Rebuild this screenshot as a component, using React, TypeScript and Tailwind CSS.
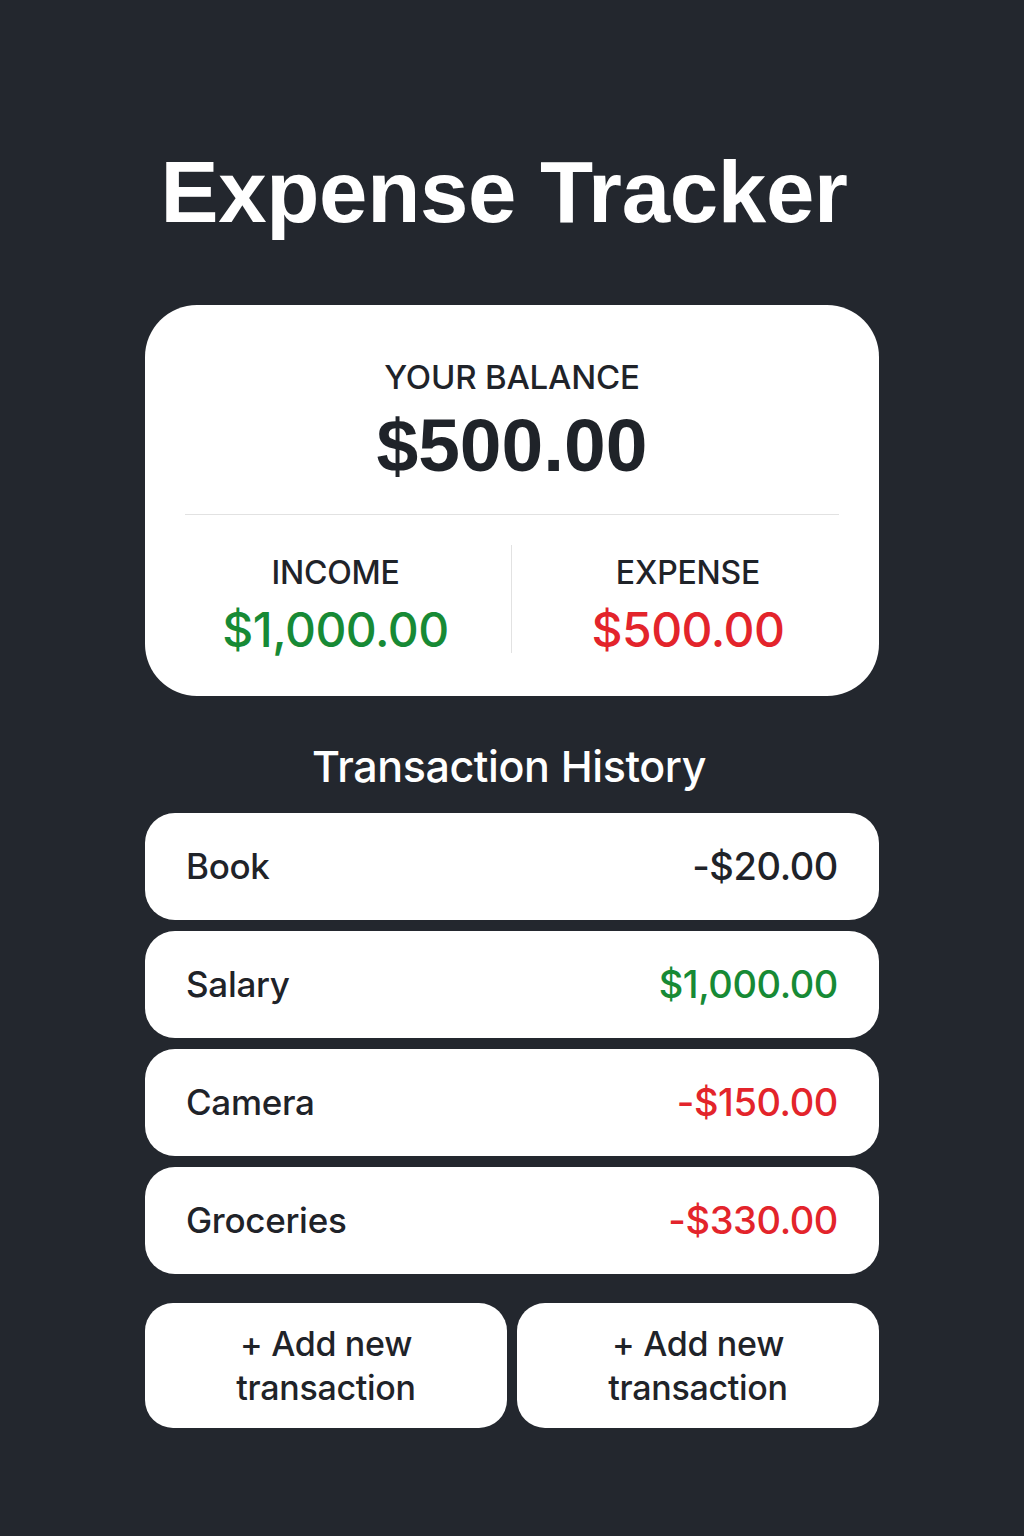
import React from "react";

const font = { fontFamily: '"Liberation Sans", Arial, sans-serif' };
const med = { fontFamily: 'Inter, Roboto, "Liberation Sans", Arial, sans-serif' };

const rows = [
  { name: "Book", amount: "-$20.00", color: "text-[#1f2329]" },
  { name: "Salary", amount: "$1,000.00", color: "text-[#178a35]" },
  { name: "Camera", amount: "-$150.00", color: "text-[#e3242b]" },
  { name: "Groceries", amount: "-$330.00", color: "text-[#e3242b]" },
];

export default function App() {
  return (
    <div className="min-h-[1536px] w-full bg-[#23272e] flex flex-col items-center" style={font}>
      <h1 className="mt-[146px] pr-[16px] text-[87px] leading-[92px] font-bold text-white tracking-[-0.3px]">
        Expense Tracker
      </h1>
      <div className="mt-[67px] w-[734px] h-[391px] rounded-[52px] bg-white flex flex-col">
        <div className="flex flex-col items-center pt-[52px]">
          <div className="text-[33px] leading-[40px] text-[#1f2329] font-medium tracking-[-0.2px]" style={med}>YOUR BALANCE</div>
          <div className="mt-[10px] text-[75px] leading-[76px] font-bold text-[#1f2329]">$500.00</div>
        </div>
        <div className="mx-[40px] mt-[31px] h-px bg-[#e2e2e2]" />
        <div className="flex px-[15px] pt-[30px]">
          <div className="w-[352px] flex flex-col items-center border-r border-[#e2e2e2] h-[108px]">
            <div className="mt-[8px] text-[32px] leading-[40px] text-[#1f2329] font-medium tracking-[-0.2px]" style={med}>INCOME</div>
            <div className="mt-[10px] text-[48px] leading-[54px] text-[#178a35] font-medium tracking-[-0.5px]" style={med}>$1,000.00</div>
          </div>
          <div className="flex-1 flex flex-col items-center">
            <div className="mt-[8px] text-[32px] leading-[40px] text-[#1f2329] font-medium tracking-[-0.2px]" style={med}>EXPENSE</div>
            <div className="mt-[10px] text-[48px] leading-[54px] text-[#e3242b] font-medium tracking-[-0.5px]" style={med}>$500.00</div>
          </div>
        </div>
      </div>
      <h2 className="mt-[44px] pr-[6px] text-[43px] leading-[52px] text-white font-medium tracking-[-0.4px]" style={med}>Transaction History</h2>
      <div className="mt-[21px] w-[734px] flex flex-col gap-[11px]">
        {rows.map((r) => (
          <div key={r.name} className="h-[107px] rounded-[30px] bg-white flex items-center justify-between px-[41px]">
            <span className="text-[35px] text-[#1f2329] font-medium tracking-[-0.3px]" style={med}>{r.name}</span>
            <span className={`text-[38px] font-medium tracking-[-0.4px] ${r.color}`} style={med}>{r.amount}</span>
          </div>
        ))}
      </div>
      <div className="mt-[29px] w-[734px] grid grid-cols-2 gap-[10px]">
        {[0, 1].map((i) => (
          <button key={i} className="h-[125px] rounded-[28px] bg-white flex items-center justify-center text-center text-[34px] leading-[44px] text-[#1f2329] font-medium tracking-[-0.3px]" style={med}>
            + Add new<br />transaction
          </button>
        ))}
      </div>
    </div>
  );
}
